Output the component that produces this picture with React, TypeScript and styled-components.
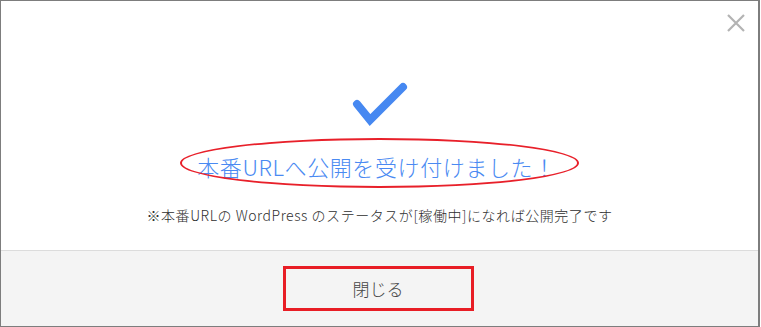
import { createGlobalStyle, styled } from 'styled-components';

const GlobalStyle = createGlobalStyle`
  html, body {
    margin: 0;
    padding: 0;
    background: #ffffff;
  }
  body {
    font-family: "Noto Sans CJK JP", "Liberation Sans", sans-serif;
  }
`;

const App = () => {
  return (
    <>
      <GlobalStyle />
      <Modal>
        <CloseIcon aria-label="close">
          <svg width="18" height="18" viewBox="0 0 18 18">
            <path d="M1 1 L17 17 M17 1 L1 17" stroke="#b3b3b3" strokeWidth="2.2" fill="none" />
          </svg>
        </CloseIcon>

        <Body>
          <Check width="56" height="44" viewBox="0 0 56 44">
            <polyline
              points="5,22 18,38 51,5"
              fill="none"
              stroke="#4688f1"
              strokeWidth="8"
              strokeLinecap="round"
              strokeLinejoin="miter"
            />
          </Check>
          <Title>
            本番URLへ公開を受け付けました！
            <Ellipse />
          </Title>
          <Note>※本番URLの WordPress のステータスが[稼働中]になれば公開完了です</Note>
        </Body>

        <Footer>
          <FooterButton>閉じる</FooterButton>
        </Footer>
      </Modal>
    </>
  );
};

const Modal = styled.div`
  position: relative;
  box-sizing: border-box;
  width: 760px;
  height: 327px;
  border: 1px solid #7d7d7d;
  border-right-width: 2px;
  background: #ffffff;
  display: flex;
  flex-direction: column;
`;

const CloseIcon = styled.button`
  position: absolute;
  top: 12px;
  right: 12px;
  width: 20px;
  height: 20px;
  padding: 0;
  border: none;
  background: transparent;
  display: flex;
  align-items: center;
  justify-content: center;
  cursor: pointer;
`;

const Body = styled.div`
  height: 249px;
  display: flex;
  flex-direction: column;
  align-items: center;
  padding-top: 81px;
  box-sizing: border-box;
`;

const Check = styled.svg`
  display: block;
  margin-left: 1px;
`;

const Title = styled.div`
  position: relative;
  margin-top: 25px;
  margin-right: 6px;
  font-size: 22px;
  font-weight: 300;
  line-height: 30px;
  color: #4a8af2;
  letter-spacing: 0.6px;
  white-space: nowrap;
`;

const Ellipse = styled.span`
  position: absolute;
  left: -17px;
  right: -23px;
  top: -13px;
  bottom: -7px;
  border: 2.5px solid #e8202a;
  border-radius: 50%;
  pointer-events: none;
`;

const Note = styled.div`
  margin-top: 24px;
  font-size: 14px;
  font-weight: 300;
  line-height: 20px;
  color: #2e2e2e;
  letter-spacing: 0.55px;
  white-space: nowrap;
`;

const Footer = styled.div`
  flex: 1;
  border-top: 1px solid #dcdcdc;
  background: #f4f4f4;
  display: flex;
  align-items: center;
  justify-content: center;
`;

const FooterButton = styled.button`
  box-sizing: border-box;
  width: 191px;
  height: 45px;
  margin-right: 3px;
  border: 3px solid #e81d25;
  background: transparent;
  font-family: inherit;
  font-size: 17px;
  font-weight: 300;
  color: #444444;
  cursor: pointer;
`;

export default App;
